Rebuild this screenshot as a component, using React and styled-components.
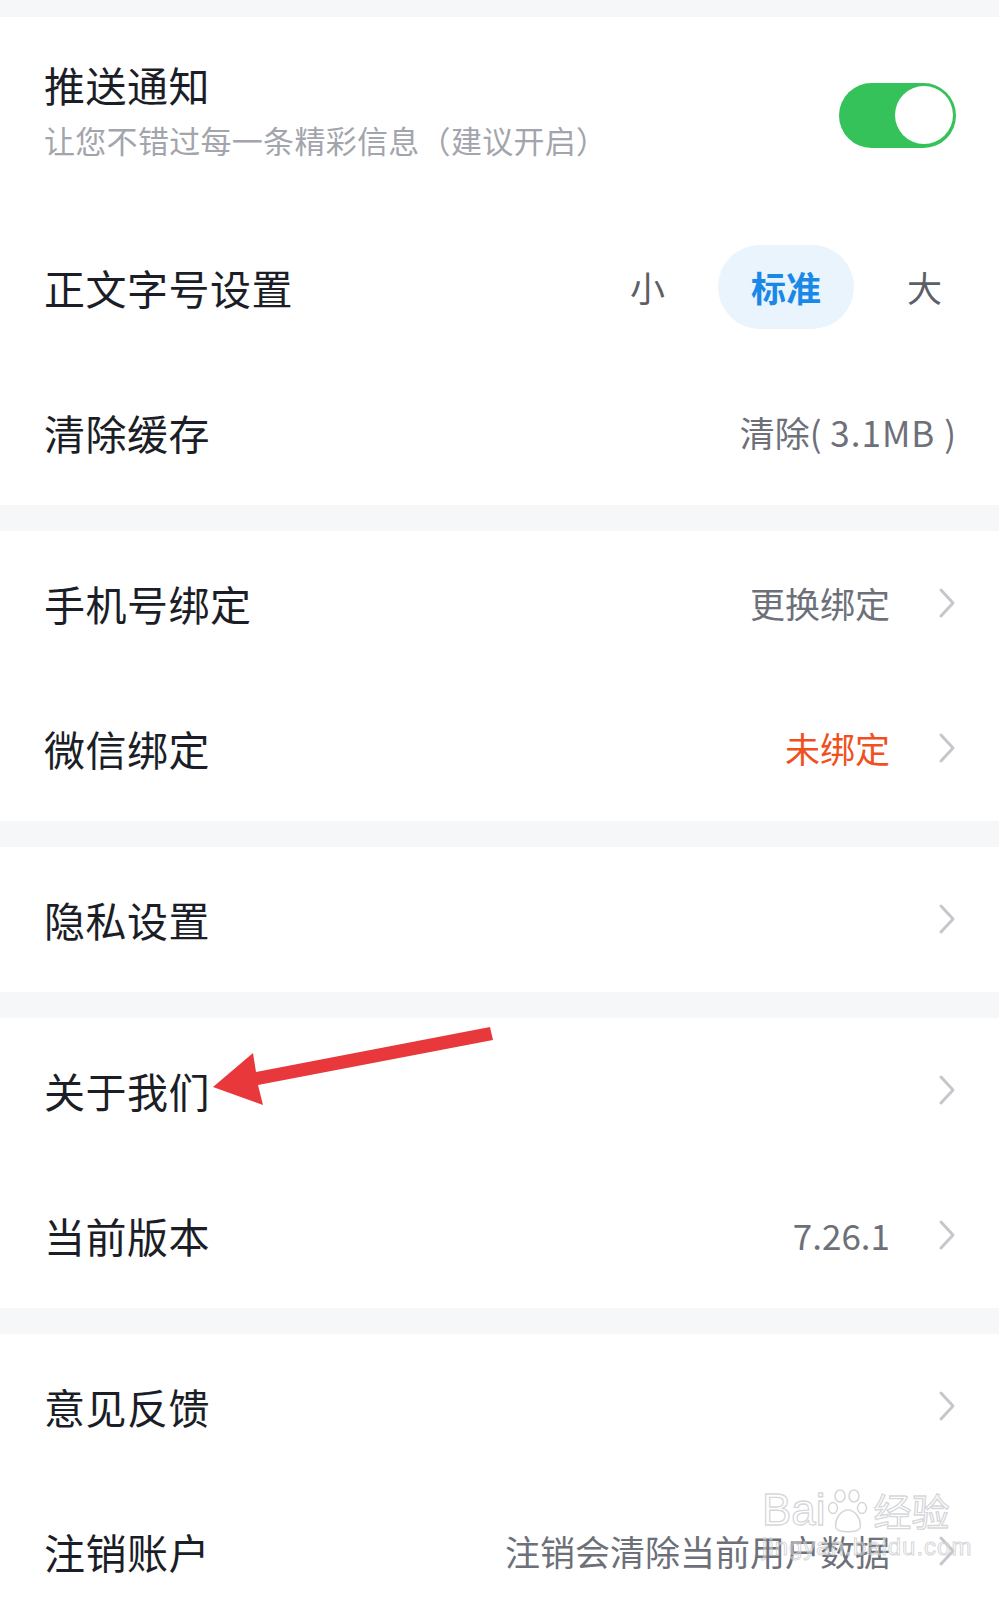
import React from "react";
import styled, { createGlobalStyle } from "styled-components";

const GlobalStyle = createGlobalStyle`
  html, body {
    margin: 0;
    padding: 0;
    background: #f6f7f9;
  }
  body {
    font-family: "Noto Sans CJK SC", "Noto Sans", sans-serif;
    -webkit-font-smoothing: antialiased;
  }
`;

const Page = styled.div`
  width: 999px;
  height: 1600px;
  overflow: hidden;
  position: relative;
  background: #f6f7f9;
  padding-top: 17px;
  box-sizing: border-box;
  display: flex;
  flex-direction: column;
  gap: 26px;
`;

const Section = styled.div`
  background: #ffffff;
  display: flex;
  flex-direction: column;
`;

const Row = styled.div`
  height: ${p => p.height || 145}px;
  box-sizing: border-box;
  padding: 0 43px 2px 44px;
  display: flex;
  align-items: ${p => (p.top ? "flex-start" : "center")};
  justify-content: space-between;
  position: relative;
`;

const TextBlock = styled.div`
  display: flex;
  flex-direction: column;
  padding-top: ${p => p.offset || 0}px;
`;

const Title = styled.div`
  font-size: 41px;
  line-height: 50px;
  color: #1b1e27;
  letter-spacing: 0.5px;
`;

const Subtitle = styled.div`
  font-size: 31px;
  line-height: 38px;
  margin-top: 12px;
  letter-spacing: 0.3px;
  color: #a2a5ac;
`;

const Right = styled.div`
  display: flex;
  align-items: center;
  gap: 48px;
  align-self: center;
`;

const Value = styled.span`
  font-size: 35px;
  line-height: 44px;
  color: ${p => p.color || "#6d7078"};
`;

const Digits = styled.span`
  letter-spacing: 1px;
`;

const Toggle = styled.div`
  width: 117px;
  height: 65px;
  border-radius: 33px;
  background: #35c25a;
  display: flex;
  align-items: center;
  justify-content: flex-end;
  padding-right: 3px;
  box-sizing: border-box;
`;

const Knob = styled.div`
  width: 58px;
  height: 58px;
  border-radius: 50%;
  background: #ffffff;
`;

const Segmented = styled.div`
  display: flex;
  align-items: center;
  gap: 20px;
  margin-right: -19px;
`;

const Option = styled.div`
  height: 84px;
  padding: 0 33px;
  border-radius: 42px;
  display: flex;
  align-items: center;
  font-size: 35px;
  font-weight: ${p => (p.active ? 700 : 400)};
  color: ${p => (p.active ? "#1a88e8" : "#5c5f66")};
  background: ${p => (p.active ? "#e9f4fd" : "transparent")};
`;

const Arrow = styled.svg`
  position: absolute;
  left: 0;
  top: 0;
  pointer-events: none;
`;

const Watermark = styled.div`
  position: absolute;
  left: 762px;
  top: 1486px;
  width: 200px;
  color: rgba(255, 255, 255, 0.35);
  -webkit-text-stroke: 1.3px rgba(195, 197, 201, 0.7);
  font-family: "Liberation Sans", sans-serif;
  pointer-events: none;
`;

const MarkTop = styled.div`
  display: flex;
  align-items: flex-end;
  font-size: 44px;
  line-height: 48px;
  gap: 2px;
`;

const MarkCn = styled.span`
  font-family: "Noto Sans CJK SC", sans-serif;
  font-size: 38px;
  margin-left: 4px;
`;

const MarkUrl = styled.div`
  font-size: 24px;
  line-height: 26px;
  letter-spacing: 1px;
  -webkit-text-stroke: 1px rgba(195, 197, 201, 0.7);
`;

const Chevron = () => (
  <svg width="18" height="32" viewBox="0 0 18 32">
    <path
      d="M3 3 L15 16 L3 29"
      fill="none"
      stroke="#c5c7cc"
      strokeWidth="3"
      strokeLinecap="round"
      strokeLinejoin="round"
    />
  </svg>
);

const Paw = () => (
  <svg width="40" height="46" viewBox="0 0 40 46">
    <g fill="none" stroke="rgba(195,197,201,0.7)" strokeWidth="1.5">
      <ellipse cx="12" cy="8" rx="5" ry="6" />
      <ellipse cx="26" cy="8" rx="5" ry="6" />
      <ellipse cx="5" cy="20" rx="4.5" ry="5.5" />
      <ellipse cx="34" cy="20" rx="4.5" ry="5.5" />
      <path d="M8 40 C6 30 14 22 20 22 C26 22 34 30 32 40 C30 45 10 45 8 40 Z" />
    </g>
  </svg>
);

const NavRow = ({ title, value, valueColor }) => (
  <Row>
    <Title>{title}</Title>
    <Right>
      {value && <Value color={valueColor}>{value}</Value>}
      <Chevron />
    </Right>
  </Row>
);

export default function App() {
  return (
    <>
      <GlobalStyle />
      <Page>
        <Section>
          <Row height={198} top>
            <TextBlock offset={42}>
              <Title>推送通知</Title>
              <Subtitle>让您不错过每一条精彩信息（建议开启）</Subtitle>
            </TextBlock>
            <Right>
              <Toggle>
                <Knob />
              </Toggle>
            </Right>
          </Row>
          <Row>
            <Title>正文字号设置</Title>
            <Segmented>
              <Option>小</Option>
              <Option active>标准</Option>
              <Option>大</Option>
            </Segmented>
          </Row>
          <Row>
            <Title>清除缓存</Title>
            <Value>
              清除(<Digits> 3.1MB </Digits>)
            </Value>
          </Row>
        </Section>

        <Section>
          <NavRow title="手机号绑定" value="更换绑定" />
          <NavRow title="微信绑定" value="未绑定" valueColor="#f0501e" />
        </Section>

        <Section>
          <NavRow title="隐私设置" />
        </Section>

        <Section>
          <NavRow title="关于我们" />
          <NavRow title="当前版本" value="7.26.1" />
        </Section>

        <Section>
          <NavRow title="意见反馈" />
          <NavRow title="注销账户" value="注销会清除当前用户数据" />
        </Section>

        <Arrow width="999" height="1600" viewBox="0 0 999 1600">
          <path
            d="M490 1027 L493 1040 L258 1085 L263 1105 L213 1087 L253 1053 L256 1072 Z"
            fill="#e8383b"
          />
        </Arrow>

        <Watermark>
          <MarkTop>
            <span>Bai</span>
            <Paw />
            <MarkCn>经验</MarkCn>
          </MarkTop>
          <MarkUrl>jingyan.baidu.com</MarkUrl>
        </Watermark>
      </Page>
    </>
  );
}
